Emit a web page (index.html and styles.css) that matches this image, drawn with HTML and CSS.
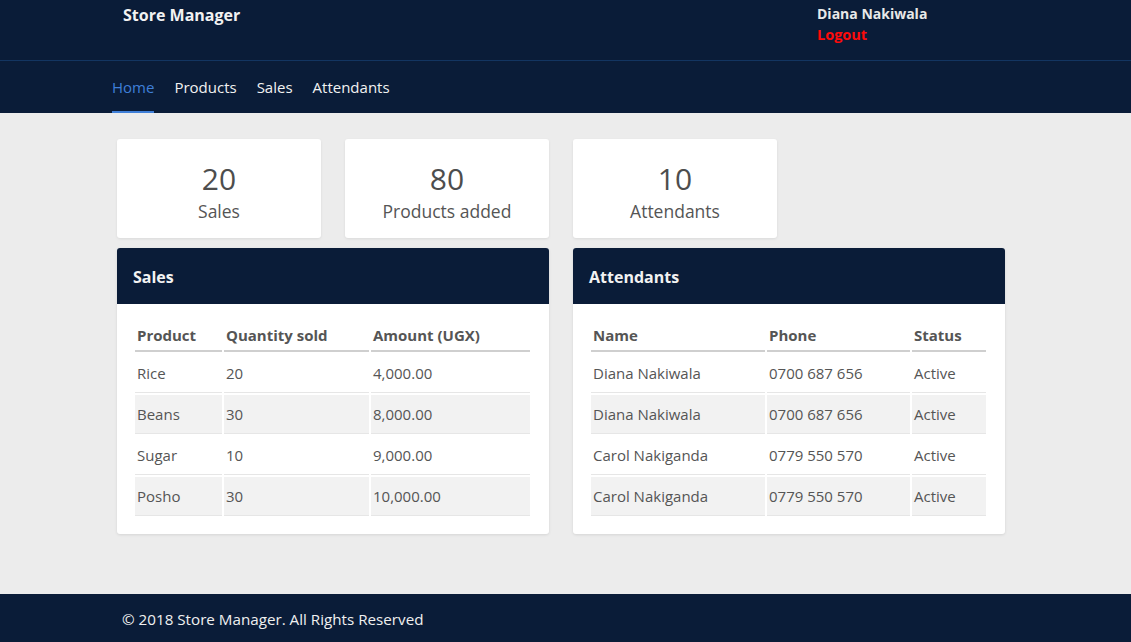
FILE: index.html
```html
<!DOCTYPE html>
<html lang="en">
<head>
<meta charset="utf-8">
<title>Store Manager</title>
<link rel="stylesheet" href="styles.css">
</head>
<body>
<header class="topbar">
  <div class="brand">Store Manager</div>
  <div class="user">
    <div class="user-name">Diana Nakiwala</div>
    <a class="logout" href="#">Logout</a>
  </div>
</header>
<nav class="navbar">
  <a class="nav-link active" href="#">Home</a>
  <a class="nav-link" href="#">Products</a>
  <a class="nav-link" href="#">Sales</a>
  <a class="nav-link" href="#">Attendants</a>
</nav>
<main class="content">
  <section class="stats">
    <div class="stat-card"><div class="stat-num">20</div><div class="stat-label">Sales</div></div>
    <div class="stat-card"><div class="stat-num">80</div><div class="stat-label">Products added</div></div>
    <div class="stat-card"><div class="stat-num">10</div><div class="stat-label">Attendants</div></div>
  </section>
  <section class="panels">
    <div class="panel">
      <div class="panel-head">Sales</div>
      <div class="panel-body">
        <table class="data">
          <thead><tr><th class="c-prod">Product</th><th class="c-qty">Quantity sold</th><th>Amount (UGX)</th></tr></thead>
          <tbody>
            <tr><td>Rice</td><td>20</td><td>4,000.00</td></tr>
            <tr><td>Beans</td><td>30</td><td>8,000.00</td></tr>
            <tr><td>Sugar</td><td>10</td><td>9,000.00</td></tr>
            <tr><td>Posho</td><td>30</td><td>10,000.00</td></tr>
          </tbody>
        </table>
      </div>
    </div>
    <div class="panel">
      <div class="panel-head">Attendants</div>
      <div class="panel-body">
        <table class="data">
          <thead><tr><th class="c-name">Name</th><th class="c-phone">Phone</th><th>Status</th></tr></thead>
          <tbody>
            <tr><td>Diana Nakiwala</td><td>0700 687 656</td><td>Active</td></tr>
            <tr><td>Diana Nakiwala</td><td>0700 687 656</td><td>Active</td></tr>
            <tr><td>Carol Nakiganda</td><td>0779 550 570</td><td>Active</td></tr>
            <tr><td>Carol Nakiganda</td><td>0779 550 570</td><td>Active</td></tr>
          </tbody>
        </table>
      </div>
    </div>
  </section>
</main>
<footer class="footer">© 2018 Store Manager. All Rights Reserved</footer>
</body>
</html>
```
FILE: styles.css
```css
* { box-sizing: border-box; }
html, body { margin: 0; padding: 0; }
body {
  font-family: "Open Sans", "Noto Sans", sans-serif;
  background: #ececec;
  color: #555;
  height: 642px;
  display: flex;
  flex-direction: column;
}
.topbar {
  background: #0a1c38;
  height: 61px;
  border-bottom: 1px solid #133561;
  display: flex;
  align-items: flex-start;
  padding-left: 123px;
}
.brand {
  flex: 1;
  color: #f2f2f2;
  font-weight: 700;
  font-size: 16px;
  line-height: 20px;
  padding-top: 5px;
}
.user {
  width: 314px;
  padding-top: 4px;
}
.user-name {
  color: #e8e8e8;
  font-weight: 700;
  font-size: 14px;
  line-height: 20px;
}
.logout {
  display: block;
  color: #ff0a0a;
  font-weight: 700;
  font-size: 14.5px;
  line-height: 22px;
  text-decoration: none;
}
.navbar {
  background: #0a1c38;
  height: 52px;
  display: flex;
  gap: 20px;
  padding-left: 112px;
}
.nav-link {
  color: #f2f2f2;
  text-decoration: none;
  font-size: 15px;
  line-height: 52px;
  border-bottom: 2px solid transparent;
}
.nav-link.active {
  color: #3f7fd8;
  border-bottom-color: #3f7fd8;
}
.content {
  flex: 1;
  padding: 26px 0 0 117px;
}
.stats {
  display: flex;
  gap: 24px;
}
.stat-card {
  width: 204px;
  height: 99px;
  background: #fff;
  border-radius: 3px;
  box-shadow: 0 1px 3px rgba(0,0,0,0.08);
  text-align: center;
  padding-top: 21px;
}
.stat-num {
  font-size: 30px;
  line-height: 38px;
  color: #4d4d4d;
}
.stat-label {
  font-size: 17.5px;
  line-height: 26px;
  color: #555;
}
.panels {
  display: flex;
  gap: 24px;
  margin-top: 10px;
}
.panel {
  width: 432px;
  background: #fff;
  border-radius: 3px;
  box-shadow: 0 1px 3px rgba(0,0,0,0.1);
  overflow: hidden;
}
.panel-head {
  background: #0a1c38;
  color: #f2f2f2;
  font-weight: 700;
  font-size: 16px;
  height: 56px;
  line-height: 58px;
  padding-left: 16px;
}
.panel-body {
  padding: 13px 17px 16px 16px;
}
.data {
  width: 100%;
  border-spacing: 2px;
  font-size: 15px;
  color: #555;
}
.data th {
  text-align: left;
  font-weight: 700;
  font-size: 15px;
  padding: 6px 2px 5px;
  border-bottom: 2px solid #cfcfcf;
  line-height: 20px;
}
.data td {
  padding: 9px 2px;
  line-height: 20px;
  border-bottom: 1px solid #e6e6e6;
}
.data tbody tr:nth-child(even) td { background: #f2f2f2; }
.c-prod { width: 87px; }
.c-qty { width: 145px; }
.c-name { width: 174px; }
.c-phone { width: 143px; }
.footer {
  background: #0a1c38;
  color: #f0f0f0;
  height: 48px;
  line-height: 50px;
  padding-left: 122px;
  font-size: 15.2px;
}
```
